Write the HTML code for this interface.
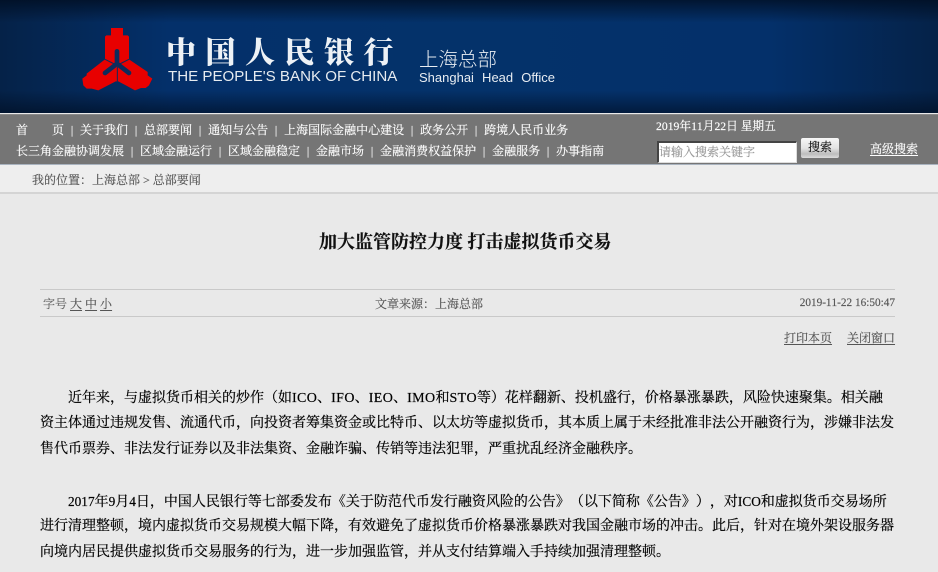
<!DOCTYPE html>
<html lang="zh-CN">
<head>
<meta charset="utf-8">
<style>
html,body{margin:0;padding:0;width:938px;height:572px;overflow:hidden;background:#e9e9e9}
body{position:relative;font-family:"Liberation Serif","Noto Serif CJK SC",serif;font-size:12px;color:#333;text-spacing-trim:space-all;font-kerning:none;-webkit-text-stroke:.15px currentColor}
.a{position:absolute;white-space:nowrap}
#hd{position:absolute;left:0;top:0;width:938px;height:113px;background:
linear-gradient(180deg,rgba(0,12,30,.75) 0,rgba(0,12,30,0) 20%,rgba(0,12,30,0) 80%,rgba(0,12,30,.6) 100%),
linear-gradient(90deg,#052248 0,#04306a 18%,#04326a 50%,#04306a 82%,#052248 100%)}
#nav{position:absolute;left:0;top:115px;width:938px;height:49px;background:#757575;border-bottom:1px solid #a9b3bf;box-shadow:0 -1px 0 #8a8a8a}
#crumb{position:absolute;left:0;top:165px;width:938px;height:27px;background:#eee;border-bottom:2px solid #d4d4d4}
.n{color:#fff;font-size:12px;line-height:16px}
.n i{font-style:normal;display:inline-block;width:16px;text-align:center}
.l{position:absolute;left:40px;width:855px;height:1px;background:#c9c9c9}
.p{position:absolute;left:40px;white-space:nowrap;font-size:14px;line-height:26px;color:#000;height:26px;-webkit-text-stroke:.2px #000}
.p b{font-weight:400;font-size:13.3px}
.p s{text-decoration:none;letter-spacing:.35px}
u{text-underline-offset:2px}
</style>
</head>
<body>
<div id="hd"></div>
<svg class="a" style="left:0;top:0" width="300" height="113" viewBox="0 0 300 113">
<g transform="translate(75 22) scale(.3333)">
<path fill="#e80000" d="M108 18H144V40H158L162 44V112L218 150V160L232 170L222 190L212 198H198L180 205L130 178H122L70 205L50 200H35L25 190L22 170L35 160V155L90 112V44L94 40H108Z"/>
<path fill="none" stroke="#0d2c5c" stroke-width="14" stroke-linecap="round" stroke-linejoin="round" d="M126 88V125L90 153M126 125L162 153"/>
<path fill="none" stroke="#0d2c5c" stroke-width="3" d="M127 135V178M90 112L118 126M162 112L134 126"/>
</g>
</svg>
<div class="a" style="left:166px;top:29px;font:900 30px/42px 'Noto Serif CJK SC',serif;letter-spacing:9.5px;color:#eef2f6;-webkit-text-stroke:0">中国人民银行</div>
<div class="a" style="left:168px;top:68px;font:15.1px/18px 'Liberation Sans',sans-serif;color:#e6ebf0;-webkit-text-stroke:0">THE PEOPLE'S BANK OF CHINA</div>
<div class="a" style="left:419px;top:47px;font:19.5px/26px 'Liberation Sans','Noto Sans CJK SC',sans-serif;font-weight:300;color:#e8edf2;-webkit-text-stroke:0">上海总部</div>
<div class="a" style="left:419px;top:70px;font:13px/16px 'Liberation Sans',sans-serif;word-spacing:4.5px;color:#e8edf2;-webkit-text-stroke:0">Shanghai Head Office</div>

<div id="nav"></div>
<div class="a n" style="left:16px;top:122px">首<span style="display:inline-block;width:24px"></span>页<i>|</i>关于我们<i>|</i>总部要闻<i>|</i>通知与公告<i>|</i>上海国际金融中心建设<i>|</i>政务公开<i>|</i>跨境人民币业务</div>
<div class="a n" style="left:16px;top:143px">长三角金融协调发展<i>|</i>区域金融运行<i>|</i>区域金融稳定<i>|</i>金融市场<i>|</i>金融消费权益保护<i>|</i>金融服务<i>|</i>办事指南</div>
<div class="a n" style="left:656px;top:119px;font-size:11.7px">2019年11月22日 星期五</div>
<div class="a" style="left:657px;top:141px;width:137px;height:19px;background:#fff;border-top:2px solid #444;border-left:2px solid #444;border-right:1px solid #ddd;border-bottom:1px solid #ddd;color:#999;font-size:12px;line-height:19px">请输入搜索关键字</div>
<div class="a" style="left:801px;top:138px;width:38px;height:20px;border-radius:2px;background:linear-gradient(180deg,#f6f6f6 0,#e4e4e4 50%,#bdbdbd 80%,#dcdcdc 100%);color:#111;font-size:12px;line-height:19px;text-align:center">搜索</div>
<div class="a n" style="left:870px;top:141px"><u>高级搜索</u></div>

<div id="crumb"></div>
<div class="a" style="left:32px;top:172px;line-height:16px;color:#555">我的位置：上海总部 &gt; 总部要闻</div>

<div class="a" style="left:319px;top:230px;font-size:18px;line-height:24px;font-weight:700;color:#111">加大监管防控力度 打击虚拟货币交易</div>

<div class="l" style="top:289px"></div>
<div class="l" style="top:316px"></div>
<div class="a" style="left:43px;top:296px;line-height:16px;color:#666">字号 <u style="color:#555">大</u> <u style="color:#555">中</u> <u style="color:#555">小</u></div>
<div class="a" style="left:375px;top:296px;line-height:16px;color:#555">文章来源：上海总部</div>
<div class="a" style="right:43px;top:295px;line-height:16px;color:#555;font-size:11.25px">2019-11-22 16:50:47</div>
<div class="a" style="left:784px;top:330px;line-height:16px;color:#555"><u>打印本页</u></div>
<div class="a" style="left:847px;top:330px;line-height:16px;color:#555"><u>关闭窗口</u></div>

<div class="p" style="left:68px;top:386px">近年来，与虚拟货币相关的炒作（如<s>ICO</s>、<s>IFO</s>、<s>IEO</s>、<s>IMO</s>和<s>STO</s>等）花样翻新、投机盛行，价格暴涨暴跌，风险快速聚集。相关融</div>
<div class="p" style="top:411px">资主体通过违规发售、流通代币，向投资者筹集资金或比特币、以太坊等虚拟货币，其本质上属于未经批准非法公开融资行为，涉嫌非法发</div>
<div class="p" style="top:437px">售代币票券、非法发行证券以及非法集资、金融诈骗、传销等违法犯罪，严重扰乱经济金融秩序。</div>
<div class="p" style="left:68px;top:489px"><b>2017</b>年<b>9</b>月<b>4</b>日，中国人民银行等七部委发布《关于防范代币发行融资风险的公告》（以下简称《公告》），对<b>ICO</b>和虚拟货币交易场所</div>
<div class="p" style="top:514px">进行清理整顿，境内虚拟货币交易规模大幅下降，有效避免了虚拟货币价格暴涨暴跌对我国金融市场的冲击。此后，针对在境外架设服务器</div>
<div class="p" style="top:540px">向境内居民提供虚拟货币交易服务的行为，进一步加强监管，并从支付结算端入手持续加强清理整顿。</div>
</body>
</html>
